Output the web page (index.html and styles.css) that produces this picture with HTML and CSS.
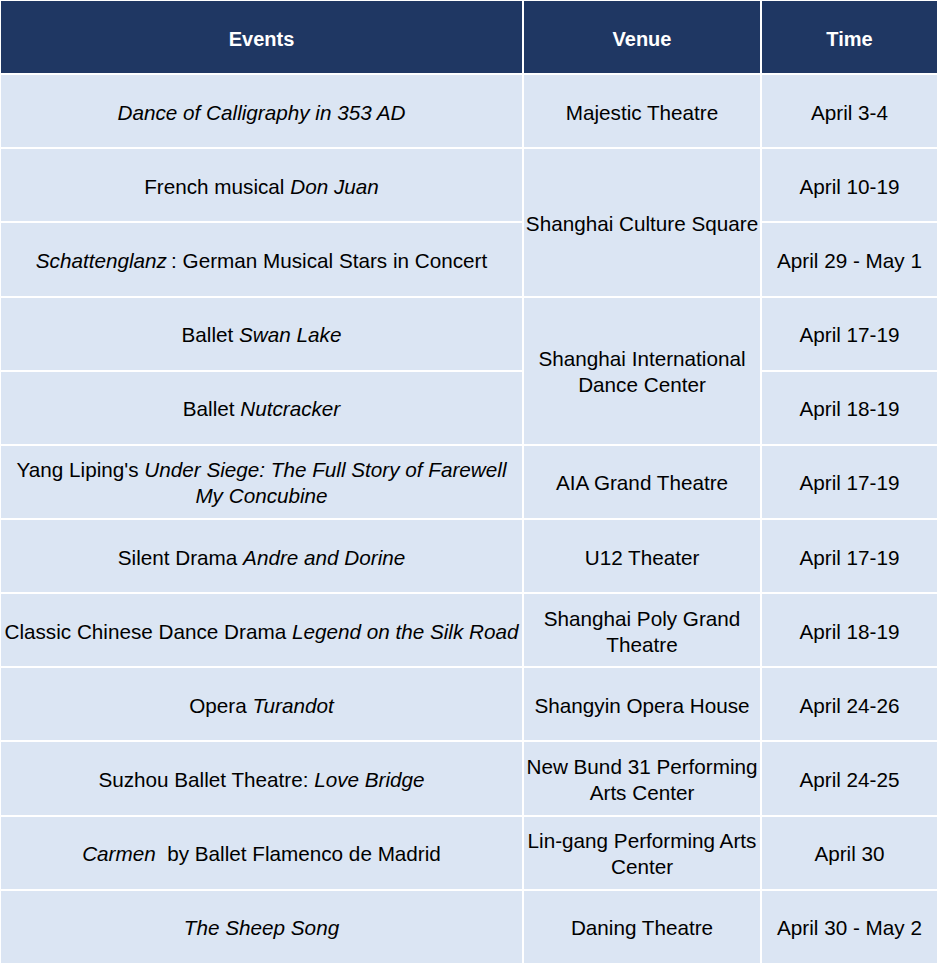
FILE: index.html
```html
<!DOCTYPE html>
<html lang="en">
<head>
<meta charset="utf-8">
<title>Events</title>
<link rel="stylesheet" href="styles.css">
</head>
<body>
<div class="schedule">
  <div class="cell head"><span class="txt">Events</span></div>
  <div class="cell head"><span class="txt">Venue</span></div>
  <div class="cell head"><span class="txt">Time</span></div>

  <div class="cell"><span class="txt"><em>Dance of Calligraphy in 353 AD</em></span></div>
  <div class="cell venue"><span class="txt">Majestic Theatre</span></div>
  <div class="cell"><span class="txt">April 3-4</span></div>

  <div class="cell"><span class="txt">French musical <em>Don Juan</em></span></div>
  <div class="cell venue span2"><span class="txt">Shanghai Culture Square</span></div>
  <div class="cell"><span class="txt">April 10-19</span></div>

  <div class="cell"><span class="txt"><em>Schattenglanz</em>&thinsp;: German Musical Stars in Concert</span></div>
  <div class="cell"><span class="txt">April 29 - May 1</span></div>

  <div class="cell"><span class="txt">Ballet <em>Swan Lake</em></span></div>
  <div class="cell venue span2"><span class="txt">Shanghai International<br>Dance Center</span></div>
  <div class="cell"><span class="txt">April 17-19</span></div>

  <div class="cell"><span class="txt">Ballet <em>Nutcracker</em></span></div>
  <div class="cell"><span class="txt">April 18-19</span></div>

  <div class="cell"><span class="txt">Yang Liping's <em>Under Siege: The Full Story of Farewell<br>My Concubine</em></span></div>
  <div class="cell venue"><span class="txt">AIA Grand Theatre</span></div>
  <div class="cell"><span class="txt">April 17-19</span></div>

  <div class="cell"><span class="txt">Silent Drama <em>Andre and Dorine</em></span></div>
  <div class="cell venue"><span class="txt">U12 Theater</span></div>
  <div class="cell"><span class="txt">April 17-19</span></div>

  <div class="cell nowrap"><span class="txt">Classic Chinese Dance Drama <em>Legend on the Silk Road</em></span></div>
  <div class="cell venue"><span class="txt">Shanghai Poly Grand<br>Theatre</span></div>
  <div class="cell"><span class="txt">April 18-19</span></div>

  <div class="cell"><span class="txt">Opera <em>Turandot</em></span></div>
  <div class="cell venue"><span class="txt">Shangyin Opera House</span></div>
  <div class="cell"><span class="txt">April 24-26</span></div>

  <div class="cell"><span class="txt">Suzhou Ballet Theatre: <em>Love Bridge</em></span></div>
  <div class="cell venue"><span class="txt">New Bund 31 Performing<br>Arts Center</span></div>
  <div class="cell"><span class="txt">April 24-25</span></div>

  <div class="cell"><span class="txt"><em>Carmen</em>&nbsp; by Ballet Flamenco de Madrid</span></div>
  <div class="cell venue"><span class="txt">Lin-gang Performing Arts<br>Center</span></div>
  <div class="cell"><span class="txt">April 30</span></div>

  <div class="cell"><span class="txt"><em>The Sheep Song</em></span></div>
  <div class="cell venue"><span class="txt">Daning Theatre</span></div>
  <div class="cell"><span class="txt">April 30 - May 2</span></div>
</div>
</body>
</html>
```

FILE: styles.css
```css
html, body {
  margin: 0;
  padding: 0;
  background: #ffffff;
}

.schedule {
  display: grid;
  grid-template-columns: 521px 236px 175px;
  grid-template-rows: repeat(13, 72.15px);
  gap: 2px;
  margin: 1px 0 0 1px;
  width: 936px;
  font-family: "Liberation Sans", Arial, sans-serif;
  font-size: 20.7px;
  line-height: 26px;
  color: #000000;
}

.cell {
  display: flex;
  align-items: center;
  justify-content: center;
  text-align: center;
  padding: 3px 3px 0;
  background: #dbe5f3;
}

.txt {
  display: block;
}

.cell em {
  font-style: italic;
}

.head {
  background: #1f3763;
  color: #ffffff;
  font-weight: bold;
  font-size: 20px;
}

.span2 {
  grid-row: span 2;
}

.venue,
.nowrap {
  white-space: nowrap;
}
```
